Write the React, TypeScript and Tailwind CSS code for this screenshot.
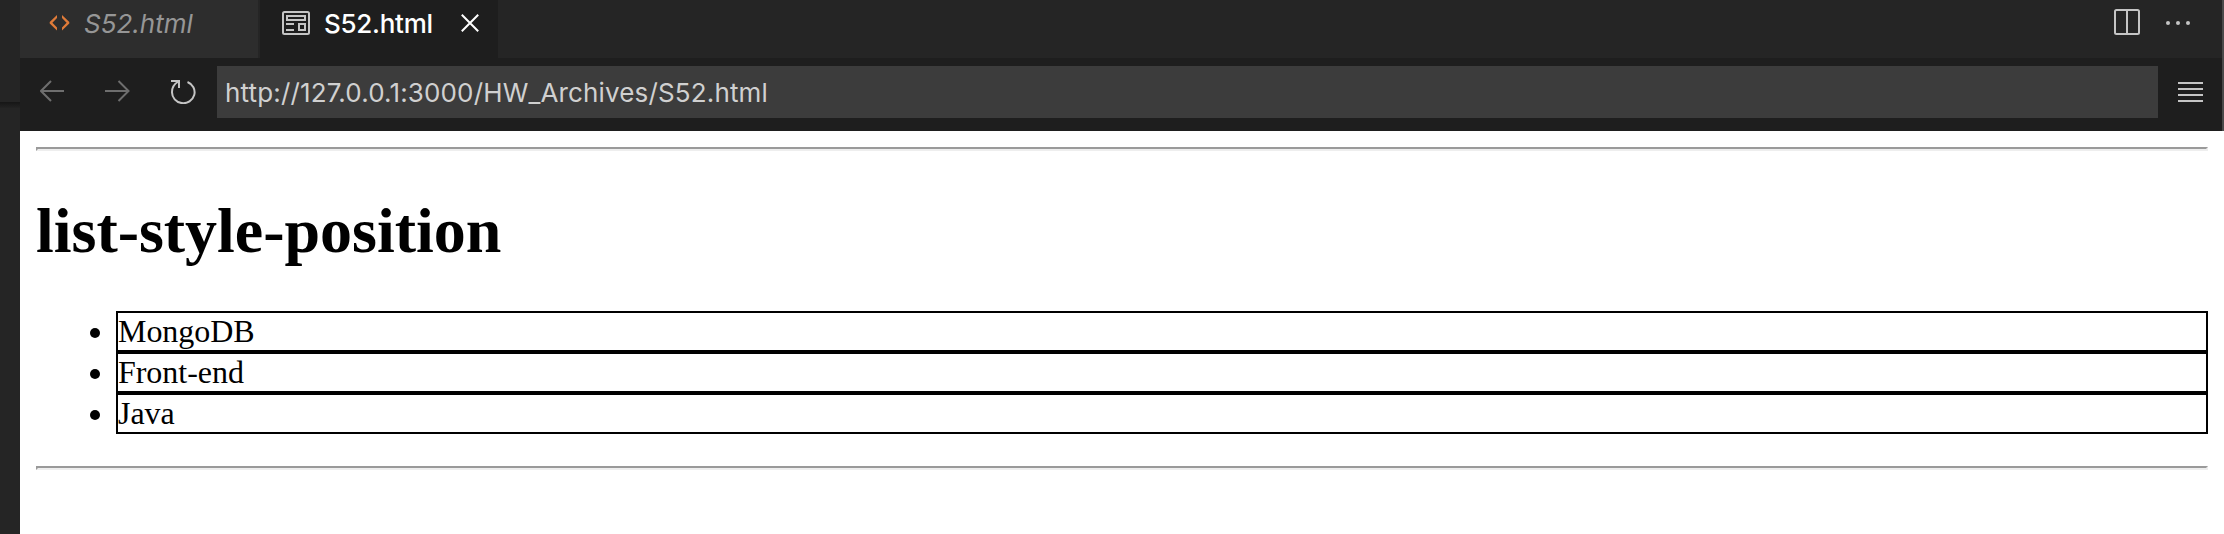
import React from "react";

const Bullet = ({ children }: { children: string }) => (
  <li className="flex h-[41px] items-center">
    <span className="ml-[54px] mr-4 flex w-[10px] shrink-0 self-center">
      <span className="mt-[3px] size-[10px] rounded-full bg-black" />
    </span>
    <span className="h-[41px] flex-1 border-2 border-black text-[32px] leading-[37px] tracking-[-0.04px]">{children}</span>
  </li>
);

const Rule = () => (
  <hr className="h-1 border-2 border-b-[#eeeeee] border-l-[#9a9a9a] border-r-[#eeeeee] border-t-[#9a9a9a]" />
);

export default function App() {
  return (
    <div className="flex h-[534px] w-[2224px] overflow-hidden bg-white font-['Inter',sans-serif]">
      <aside className="flex w-5 shrink-0 flex-col bg-[#252525]">
        <div className="h-[102px]" />
        <div className="h-[6px] bg-linear-to-b from-[#161616] to-[#232323]" />
      </aside>
      <div className="flex min-w-0 flex-1 flex-col">
        <div className="flex h-[131px] shrink-0 border-r-2 border-[#4a4a4a] bg-[#1e1e1e]">
          <div className="flex min-w-0 flex-1 flex-col">
            <div className="flex h-[58px] shrink-0 bg-[#252525]">
              <div className="flex w-[240px] border-r-2 border-[#252525] bg-[#2d2d2d] pl-[29px]">
                <svg className="mt-[14px] h-[18px] w-[22px]" viewBox="0 0 22 18" fill="#e07b39">
                  <path d="M8 1v3L3.4 8.7 8 13.4v3L.7 9.5V7.9zM13 1v3l4.6 4.7L13 13.4v3l7.3-6.9V7.9z" />
                </svg>
                <span className="ml-[13px] mt-[8px] text-[26px] italic leading-[32px] text-[#969696]">S52.html</span>
              </div>
              <div className="flex w-[238px] bg-[#1e1e1e] pl-[22px]">
                <svg className="mt-[11px] h-6 w-7" viewBox="0 0 28 24" fill="none" stroke="#c5c5c5" strokeWidth="2">
                  <rect x="1" y="1" width="26" height="22" rx="1.5" />
                  <path d="M5 5h18v4H5zM17 13h6v6h-6zM4 13h8M4 19h8" />
                </svg>
                <span className="ml-[14px] mt-[8px] w-[108px] whitespace-nowrap text-[26px] font-medium leading-[32px] tracking-[-0.27px] text-white">S52.html</span>
                <svg className="ml-[29px] mt-[14px] size-[18px]" viewBox="0 0 18 18" fill="none" stroke="#fff" strokeWidth="2">
                  <path d="m.8.8 16.4 16.4M17.2.8.8 17.2" />
                </svg>
              </div>
              <div className="ml-auto flex pr-[32px]">
                <svg className="mt-[9px] size-[26px]" viewBox="0 0 26 26" fill="none" stroke="#c5c5c5" strokeWidth="2">
                  <rect x="1" y="1" width="24" height="24" rx="1.5" />
                  <path d="M13 1v24" />
                </svg>
                <svg className="ml-[26px] mt-[21px] h-[4px] w-[24px]" viewBox="0 0 24 4" fill="#c5c5c5">
                  <circle cx="2" cy="2" r="2" /><circle cx="12" cy="2" r="2" /><circle cx="22" cy="2" r="2" />
                </svg>
              </div>
            </div>
            <div className="flex h-[73px] pt-2">
              <svg className="ml-5 mt-[14px] h-[22px] w-[24px]" viewBox="0 0 24 22" fill="none" stroke="#6e6e6e" strokeWidth="2">
                <path d="M11 1 1 11l10 10M1 11h23" />
              </svg>
              <svg className="ml-[41px] mt-[14px] h-[22px] w-[25px]" viewBox="0 0 25 22" fill="none" stroke="#6e6e6e" strokeWidth="2">
                <path d="m13.500 1 10 10-10 10M0 11h24" />
              </svg>
              <svg className="ml-[41px] mt-[14px] h-6 w-[25px]" viewBox="0 0 25 24" fill="none" stroke="#c5c5c5" strokeWidth="2">
                <path d="M0 1h8v7M7.5 1.5C3 4 1 8 1 12a11.3 11 0 1 0 15.5-10" />
              </svg>
              <div className="ml-[21px] h-[52px] w-[1941px] bg-[#3c3c3c] pl-2 text-[26px] leading-[53px] tracking-[0.15px] text-[#d0d0d0]">
                http://127.0.0.1:3000/HW_Archives/S52.html
              </div>
              <svg className="ml-5 mt-4 h-5 w-[25px]" viewBox="0 0 25 20" fill="none" stroke="#c5c5c5" strokeWidth="2">
                <path d="M0 1h25M0 7h25M0 13h25M0 19h25" />
              </svg>
            </div>
          </div>
        </div>
        <main className="flex flex-1 flex-col bg-white pl-4 pr-4 pt-4 font-['Liberation_Serif',serif] text-black">
          <Rule />
          <h1 className="mt-[43px] h-[74px] text-[64px] font-bold leading-[74px] tracking-[-0.03px]">list-style-position</h1>
          <ul className="mb-8 mt-[43px]">
            <Bullet>MongoDB</Bullet>
            <Bullet>Front-end</Bullet>
            <Bullet>Java</Bullet>
          </ul>
          <Rule />
        </main>
      </div>
    </div>
  );
}
